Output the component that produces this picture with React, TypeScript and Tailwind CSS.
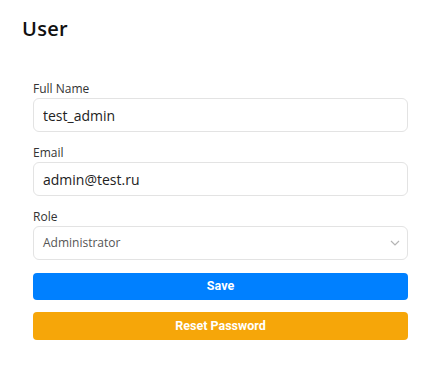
import React from "react";

const mont = { fontFamily: '"Open Sans", "DejaVu Sans", sans-serif' };

function Field({ label, children }: { label: string; children: React.ReactNode }) {
  return (
    <div className="flex flex-col mb-[12px]">
      <label className="text-[12px] leading-[18px] text-[#333333]">{label}</label>
      {children}
    </div>
  );
}

export default function App() {
  return (
    <div className="w-[442px] h-[373px] bg-white px-[22px] pt-[15px]" style={mont}>
      <h1 className="text-[20px] leading-[28px] font-semibold text-[#111111] tracking-[0.3px]">User</h1>
      <div className="ml-[11px] w-[375px] mt-[37px] flex flex-col">
        <Field label="Full Name">
          <input
            readOnly
            value="test_admin"
            className="h-[34px] w-full rounded-[6px] border border-[#e3e3e3] px-[9px] text-[14px] text-[#222222] outline-none"
            style={mont}
          />
        </Field>
        <Field label="Email">
          <input
            readOnly
            value="admin@test.ru"
            className="h-[34px] w-full rounded-[6px] border border-[#e3e3e3] px-[9px] text-[14px] text-[#222222] outline-none"
            style={mont}
          />
        </Field>
        <Field label="Role">
          <div className="relative h-[34px] w-full rounded-[6px] border border-[#e3e3e3] flex items-center px-[9px]">
            <span className="text-[12px] text-[#555555]">Administrator</span>
            <svg
              className="absolute right-[7px] top-[13px]"
              width="10"
              height="6"
              viewBox="0 0 10 6"
              fill="none"
            >
              <path d="M1 1l4 4 4-4" stroke="#b5b5b5" strokeWidth="1.2" />
            </svg>
          </div>
        </Field>
        <div className="flex flex-col gap-[12px] mt-[1px]" style={{ fontFamily: 'Roboto, "Liberation Sans", sans-serif' }}>
          <button className="h-[27px] w-full rounded-[4px] bg-[#0080ff] text-white text-[12.5px] font-bold">
            Save
          </button>
          <button className="h-[28px] w-full rounded-[4px] bg-[#f6a609] text-white text-[12.5px] font-bold">
            Reset Password
          </button>
        </div>
      </div>
    </div>
  );
}
